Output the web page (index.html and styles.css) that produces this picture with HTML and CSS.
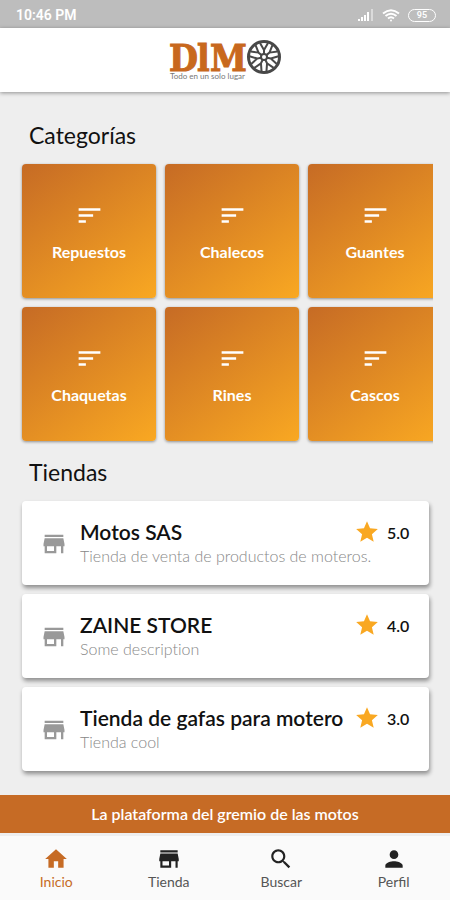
FILE: index.html
```html
<!DOCTYPE html>
<html lang="es">
<head>
<meta charset="utf-8">
<meta name="viewport" content="width=device-width, initial-scale=1">
<title>DIMO</title>
<link rel="stylesheet" href="styles.css">
</head>
<body>
<svg class="sprite" aria-hidden="true">
  <symbol id="sort" viewBox="0 0 24 24"><path d="M3 18h6v-2H3v2zM3 6v2h18V6H3zm0 7h12v-2H3v2z"/></symbol>
  <symbol id="store" viewBox="0 0 24 24"><path d="M20 4H4v2h16V4zm1 10v-2l-1-5H4l-1 5v2h1v6h10v-6h4v6h2v-6h1zm-9 4H6v-4h6v4z"/></symbol>
  <symbol id="star" viewBox="0 0 24 24"><path d="M12 17.27 18.18 21l-1.64-7.03L22 9.24l-7.19-.61L12 2 9.19 8.63 2 9.24l5.46 4.73L5.82 21z"/></symbol>
  <symbol id="home" viewBox="0 0 24 24"><path d="M10 20v-6h4v6h5v-8h3L12 3 2 12h3v8z"/></symbol>
  <symbol id="search" viewBox="0 0 24 24"><path d="M15.5 14h-.79l-.28-.27C15.41 12.59 16 11.11 16 9.5 16 5.91 13.09 3 9.5 3S3 5.91 3 9.5 5.91 16 9.5 16c1.61 0 3.09-.59 4.23-1.57l.27.28v.79l5 4.99L20.49 19l-4.99-5zm-6 0C7.01 14 5 11.99 5 9.5S7.01 5 9.5 5 14 7.01 14 9.5 11.99 14 9.5 14z"/></symbol>
  <symbol id="person" viewBox="0 0 24 24"><path d="M12 12c2.21 0 4-1.79 4-4s-1.79-4-4-4-4 1.79-4 4 1.79 4 4 4zm0 2c-2.67 0-8 1.34-8 4v2h16v-2c0-2.66-5.33-4-8-4z"/></symbol>
</svg>

<div class="status">
  <span>10:46 PM</span>
  <div class="status-icons">
    <svg class="signal" viewBox="0 0 16 12" aria-hidden="true"><path d="M0 10h2v2H0zM3 8h2v4H3zM6 6h2v6H6zM9 3h2v9H9z"/><path opacity=".45" d="M13 0h2v12h-2z"/></svg>
    <svg class="wifi" viewBox="0 0 18 13" aria-hidden="true"><path d="M1 4.500Q9-2 17 4.500M3.500 7Q9 2.500 14.500 7M6 9.500Q9 7 12 9.500"/><circle cx="9" cy="11.500" r="1"/></svg>
    <span class="battery">95</span>
  </div>
</div>

<header class="header">
  <svg class="logo" viewBox="0 0 112 44" role="img" aria-label="DIMO">
    <text class="logo-name" y="33"><tspan x="0">D</tspan><tspan x="28">l</tspan><tspan x="41">M</tspan></text>
    <text class="logo-tag" x="1" y="41">Todo en un solo lugar</text>
    <g class="wheel" transform="translate(95 19)">
      <circle class="tyre" r="15.500"/>
      <circle r="3"/>
      <path d="M0-3V-7L-4-14M0-7L4-14"/>
      <path transform="rotate(51.400)" d="M0-3V-7L-4-14M0-7L4-14"/>
      <path transform="rotate(102.900)" d="M0-3V-7L-4-14M0-7L4-14"/>
      <path transform="rotate(154.300)" d="M0-3V-7L-4-14M0-7L4-14"/>
      <path transform="rotate(205.700)" d="M0-3V-7L-4-14M0-7L4-14"/>
      <path transform="rotate(257.100)" d="M0-3V-7L-4-14M0-7L4-14"/>
      <path transform="rotate(308.600)" d="M0-3V-7L-4-14M0-7L4-14"/>
    </g>
  </svg>
</header>

<main class="main">
  <h1 class="heading">Categorías</h1>
  <div class="scroller">
    <div class="tiles">
      <button class="tile"><svg><use href="#sort"/></svg>Repuestos</button>
      <button class="tile"><svg><use href="#sort"/></svg>Chalecos</button>
      <button class="tile"><svg><use href="#sort"/></svg>Guantes</button>
      <button class="tile"><svg><use href="#sort"/></svg>Chaquetas</button>
      <button class="tile"><svg><use href="#sort"/></svg>Rines</button>
      <button class="tile"><svg><use href="#sort"/></svg>Cascos</button>
    </div>
  </div>

  <h2 class="heading">Tiendas</h2>
  <div class="stores">
    <article class="store">
      <svg class="store-icon"><use href="#store"/></svg>
      <div class="store-body">
        <div class="store-top"><h3>Motos SAS</h3><svg class="star"><use href="#star"/></svg><span class="score">5.0</span></div>
        <p>Tienda de venta de productos de moteros.</p>
      </div>
    </article>
    <article class="store">
      <svg class="store-icon"><use href="#store"/></svg>
      <div class="store-body">
        <div class="store-top"><h3>ZAINE STORE</h3><svg class="star"><use href="#star"/></svg><span class="score">4.0</span></div>
        <p>Some description</p>
      </div>
    </article>
    <article class="store">
      <svg class="store-icon"><use href="#store"/></svg>
      <div class="store-body">
        <div class="store-top"><h3>Tienda de gafas para motero</h3><svg class="star"><use href="#star"/></svg><span class="score">3.0</span></div>
        <p>Tienda cool</p>
      </div>
    </article>
  </div>
</main>

<div class="banner">La plataforma del gremio de las motos</div>
<nav class="nav">
  <a class="active" href="#inicio"><svg><use href="#home"/></svg>Inicio</a>
  <a href="#tienda"><svg><use href="#store"/></svg>Tienda</a>
  <a href="#buscar"><svg><use href="#search"/></svg>Buscar</a>
  <a href="#perfil"><svg><use href="#person"/></svg>Perfil</a>
</nav>
</body>
</html>
```
FILE: styles.css
```css
* { box-sizing: border-box; margin: 0; }

body {
  display: flex;
  flex-direction: column;
  min-height: 100vh;
  background: #eee;
  color: #111;
  font-family: Lato, sans-serif;
}

svg { flex: none; fill: currentColor; }
.sprite { display: none; }

.status {
  display: flex;
  align-items: center;
  justify-content: space-between;
  height: 28px;
  padding: 2px 14px 0 16px;
  background: #bdbdbd;
  color: #fff;
  font: 600 14px Roboto, sans-serif;
}
.status-icons { display: flex; align-items: center; gap: 8px; }
.signal { width: 16px; height: 12px; }
.wifi { width: 18px; height: 13px; }
.wifi path { fill: none; stroke: #fff; stroke-width: 2; }
.battery {
  width: 28px;
  border: 1px solid #fff;
  border-radius: 8px;
  font-size: 9px;
  line-height: 11px;
  text-align: center;
}

.header {
  display: flex;
  justify-content: center;
  height: 64px;
  padding-top: 10px;
  background: #fff;
  box-shadow: 0 1px 4px rgba(0, 0, 0, .4);
}
.logo { width: 112px; height: 44px; overflow: visible; }
.logo-name {
  fill: #c8681d;
  stroke: #c8681d;
  stroke-width: 1;
  font: bold 37px "DejaVu Serif Condensed", "DejaVu Serif", serif;
}
.logo-tag { fill: #777; font: 8px Lato, sans-serif; }
.wheel { fill: none; stroke: #484848; stroke-width: 2; }
.wheel .tyre { stroke-width: 3; }

.main { flex: 1; }
.heading {
  padding: 0 29px;
  font-size: 23px;
  font-weight: 400;
  line-height: 28px;
}
h1.heading { padding-top: 29px; }
h2.heading { padding-top: 10px; }

.scroller {
  margin-right: 17px;
  padding: 15px 0 7px 22px;
  overflow: hidden;
}
.tiles {
  display: grid;
  grid-template-columns: repeat(3, 134px);
  gap: 9px;
}
.tile {
  display: flex;
  flex-direction: column;
  align-items: center;
  justify-content: center;
  gap: 12px;
  aspect-ratio: 1;
  padding: 0;
  border: 0;
  border-radius: 4px;
  background: linear-gradient(145deg, #c66b25, #f9a822);
  box-shadow: 0 1px 3px rgba(0, 0, 0, .4);
  color: #fff;
  font: bold 16px/20px Lato, sans-serif;
}
.tile svg { width: 29px; height: 29px; }

.stores {
  display: grid;
  gap: 9px;
  padding: 15px 21px 24px 22px;
}
.store {
  display: flex;
  align-items: center;
  gap: 12px;
  padding: 19px 18px 17px;
  border-radius: 4px;
  background: #fff;
  box-shadow: 1px 3px 4px rgba(0, 0, 0, .4);
}
.store-icon { width: 28px; height: 28px; color: #999; }
.store-body { flex: 1; min-width: 0; }
.store-top { display: flex; align-items: center; height: 24px; }
.store h3 { flex: 1; font-size: 21px; font-weight: 600; line-height: 24px; white-space: nowrap; }
.star { width: 26px; height: 26px; color: #f9a822; }
.score { width: 24px; margin-left: 7px; font-size: 16px; font-weight: 600; }
.store p {
  color: #888;
  font-size: 16px;
  font-weight: 300;
  line-height: 24px;
  font-variant-ligatures: none;
  white-space: nowrap;
}

.banner {
  padding: 9px;
  background: #c66b25;
  color: #fff;
  font-size: 16px;
  font-weight: 600;
  line-height: 20px;
  text-align: center;
}
.nav {
  display: grid;
  grid-template-columns: repeat(4, 1fr);
  height: 67px;
  padding-top: 10px;
  background: #fafafa;
  border-top: 3px solid #eee;
}
.nav a {
  display: flex;
  flex-direction: column;
  align-items: center;
  gap: 2px;
  color: #555;
  font-size: 14px;
  line-height: 16px;
  text-decoration: none;
}
.nav svg { width: 26px; height: 26px; color: #222; }
.nav .active, .nav .active svg { color: #c66b25; }
```
